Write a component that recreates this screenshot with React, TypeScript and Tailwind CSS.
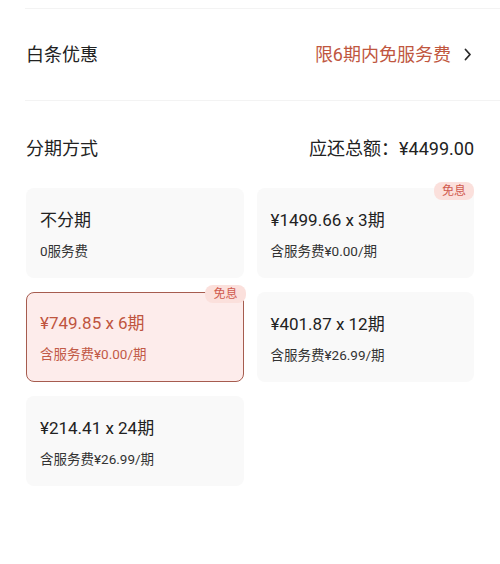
import React from "react";

type Opt = { main: string; sub: string; badge?: boolean; selected?: boolean };

const opts: Opt[] = [
  { main: "不分期", sub: "0服务费" },
  { main: "¥1499.66 x 3期", sub: "含服务费¥0.00/期", badge: true },
  { main: "¥749.85 x 6期", sub: "含服务费¥0.00/期", badge: true, selected: true },
  { main: "¥401.87 x 12期", sub: "含服务费¥26.99/期" },
  { main: "¥214.41 x 24期", sub: "含服务费¥26.99/期" },
];

function Card({ o }: { o: Opt }) {
  return (
    <div
      className={
        o.selected
          ? "relative h-[90px] rounded-[8px] bg-[#fdeceb] border-[1.5px] border-[#a65c4f] pl-[13px] pt-[19px]"
          : "relative h-[90px] rounded-[8px] bg-[#f9f9f9] pl-[14px] pt-[21px]"
      }
    >
      {o.badge && (
        <div
          className={
            o.selected
              ? "absolute -top-[8px] -right-[3px] h-[18px] px-[8px] rounded-[8px] bg-[#fbe0dc] text-[#d05a4e] text-[12px] leading-[18px]"
              : "absolute -top-[6px] right-0 h-[18px] px-[8px] rounded-[8px] bg-[#fbe0dc] text-[#d05a4e] text-[12px] leading-[18px]"
          }
        >
          免息
        </div>
      )}
      <div className={o.selected ? "text-[17px] leading-[22px] text-[#bf553f]" : "text-[17px] leading-[22px] text-[#222222]"}>
        {o.main}
      </div>
      <div className={o.selected ? "mt-[11px] text-[13.5px] leading-[18px] text-[#c25a47]" : "mt-[11px] text-[13.5px] leading-[18px] text-[#333333]"}>
        {o.sub}
      </div>
    </div>
  );
}

export default function App() {
  return (
    <div
      className="w-[500px] h-[564px] bg-white pl-[25px] pt-[8px] overflow-hidden"
      style={{ fontFamily: 'Roboto, "Noto Sans CJK SC", sans-serif' }}
    >
      <div className="h-px bg-[#f3f3f3]" />
      <div className="h-[91px] flex items-center justify-between pl-px pr-[28px]">
        <span className="text-[18px] text-[#222222]">白条优惠</span>
        <div className="flex items-center gap-[13px]">
          <span className="text-[18px] text-[#c0573f]">限6期内免服务费</span>
          <svg width="8" height="13" viewBox="0 0 8 13" fill="none">
            <path d="M1.5 1.5 L6 6.5 L1.5 11.5" stroke="#2a2a2a" strokeWidth="1.8" strokeLinecap="round" strokeLinejoin="round" />
          </svg>
        </div>
      </div>
      <div className="h-px bg-[#f3f3f3]" />
      <div className="mt-[35px] h-[24px] flex items-center justify-between pl-px pr-[26px]">
        <span className="text-[18px] text-[#222222]">分期方式</span>
        <span className="text-[18px] text-[#222222]">应还总额：¥4499.00</span>
      </div>
      <div className="mt-[28px] pl-px pr-[26px] grid grid-cols-2 gap-x-[13px] gap-y-[14px]">
        {opts.map((o, i) => (
          <Card key={i} o={o} />
        ))}
      </div>
    </div>
  );
}
